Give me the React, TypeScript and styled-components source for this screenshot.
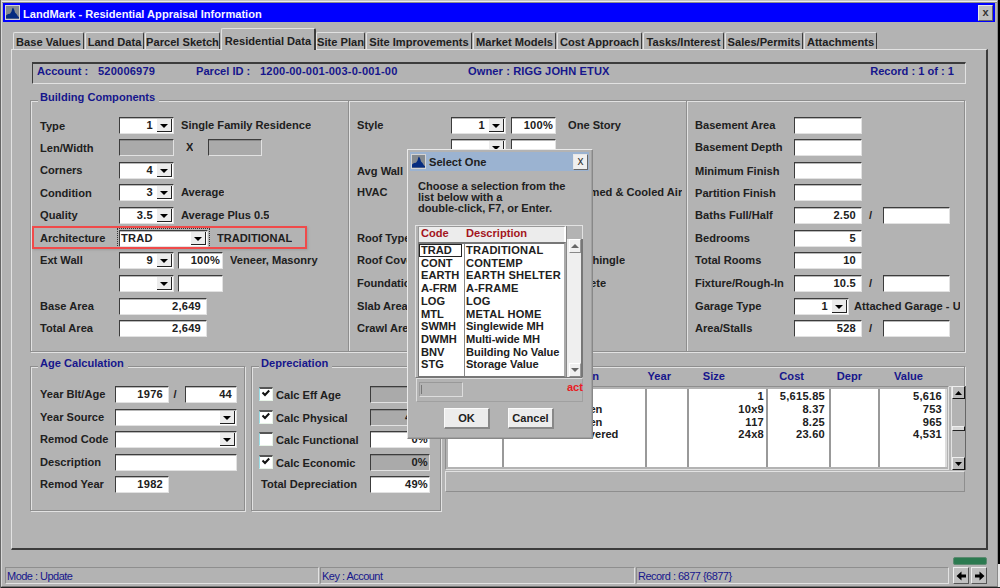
import React from "react";
import styled, { createGlobalStyle, css } from "styled-components";

const face = "#b3b3b3";
const light = "#e2e2e2";
const mid = "#8e8e8e";
const dark = "#3c3c3c";
const navy = "#16168c";

const GlobalStyle = createGlobalStyle`
  * { box-sizing: border-box; }
  body { margin: 0; background: #000; }
  #root {
    font: bold 11.1px/12px "Liberation Sans", Arial, sans-serif;
    color: #202020;
    white-space: nowrap;
    cursor: default;
  }
`;

const etched = css`
  border: 1px solid ${mid};
  box-shadow: inset 1px 1px 0 ${light}, 1px 1px 0 ${light};
`;

const Desktop = styled.div`
  position: relative;
  width: 1000px;
  height: 588px;
  overflow: hidden;
  border-left: 1px solid #666;
  background: linear-gradient(to bottom, #000 0 564px, #e8e8e8 564px 587px, #222 587px);
`;

const Window = styled.div`
  width: 997px;
  height: 587px;
  display: flex;
  flex-direction: column;
  background: ${face};
  border-left: 1px solid #d8d8d8;
  border-right: 1px solid #8a8a8a;
  border-bottom: 1px solid #777;
  border-top: 1px solid #c4c4c4;
  box-shadow: inset 0 1px 0 #ececec, inset 0 2px 0 #8d8d8d;
`;

const TitleBar = styled.div`
  display: flex;
  align-items: center;
  height: 19px;
  margin: 2px 2px 0 1px;
  padding: 0 2px 0 2px;
  background: #0000ff;
  color: #f4f4ff;
`;

const TitleText = styled.span`
  flex: 1;
  padding: 3px 0 0 3px;
`;

const CloseButton = styled.span<{ $pale?: boolean }>`
  width: 15px;
  height: 16px;
  text-align: center;
  line-height: 13px;
  font-size: ${(p) => (p.$pale ? 12 : 11)}px;
  font-weight: ${(p) => (p.$pale ? "normal" : "bold")};
  color: #333;
  background: ${(p) => (p.$pale ? "#efefef" : "#c0c0c0")};
  border: 1px solid;
  border-color: #e8e8e8 #666 #666 #e8e8e8;
`;

const TabStrip = styled.div`
  display: flex;
  align-items: flex-end;
  height: 22px;
  margin: 5px 0 0 11px;
  position: relative;
  z-index: 1;
`;

const Tab = styled.div<{ $w: number; $active?: boolean }>`
  width: ${(p) => p.$w}px;
  height: ${(p) => (p.$active ? 22 : 17)}px;
  padding-top: ${(p) => (p.$active ? 6 : 3)}px;
  margin-bottom: ${(p) => (p.$active ? -1 : 0)}px;
  text-align: center;
  background: ${face};
  border: 1px solid;
  border-color: ${light} ${dark} transparent ${light};
  border-bottom: 0;
  border-right-width: ${(p) => (p.$active ? 2 : 1)}px;
  border-radius: 2px 2px 0 0;
  margin-right: ${(p) => (p.$active ? 0 : 1)}px;
`;

const Panel = styled.div`
  width: 977px;
  height: 501px;
  margin-left: 9px;
  padding: 12px 0 0 18px;
  border: 1px solid;
  border-color: ${light} ${dark} ${dark} ${light};
  border-right-width: 2px;
  border-bottom-width: 2px;
`;

const AccountBar = styled.div`
  display: grid;
  grid-template-columns: 61px 98px 64px 208px 1fr auto;
  width: 934px;
  height: 22px;
  margin-left: 2px;
  padding: 1px 11px 0 4px;
  color: ${navy};
  border: 1px solid;
  border-color: ${dark} ${light} ${light} ${dark};
  border-top-width: 2px;
`;

const Num = styled.span`
  letter-spacing: 0.18px;
`;

const Owner = styled.span`
  letter-spacing: 0.1px;
`;

const Group = styled.section<{ $w: number; $h: number }>`
  ${etched}
  width: ${(p) => p.$w}px;
  height: ${(p) => p.$h}px;
`;

const Legend = styled.div`
  width: max-content;
  height: 14px;
  margin: -11px 0 0 7px;
  padding: 0 4px 0 2px;
  line-height: 14px;
  background: ${face};
  color: ${navy};
`;

const Columns = styled.div`
  display: grid;
  grid-template-columns: 317px 338px 1fr;
  height: 250px;
  margin-top: -3px;
`;

const Column = styled.div<{ $pad: number; $label: number; $divided?: boolean; $top: number }>`
  display: grid;
  grid-template-rows: 22px 23px 22px 23px 23px 22px 23px 23px 22px 22px;
  grid-auto-columns: 100%;
  align-content: start;
  overflow: hidden;
  padding: ${(p) => p.$top}px 4px 0 ${(p) => p.$pad}px;
  --label: ${(p) => p.$label}px;
  ${(p) =>
    p.$divided &&
    css`
      border-left: 1px solid ${mid};
      box-shadow: inset 1px 0 0 ${light};
    `}
`;

const Row = styled.div`
  position: relative;
  display: flex;
  align-items: flex-start;
  min-width: 0;
`;

const Label = styled.span<{ $down?: number }>`
  flex: none;
  width: var(--label);
  padding-top: ${(p) => 2 + (p.$down ?? 0)}px;
`;

const Note = styled.span<{ $gap: number }>`
  margin-left: ${(p) => p.$gap}px;
  padding-top: 2px;
  min-width: 0;
  overflow: hidden;
`;

const FieldBox = styled.span<{ $w: number; $off?: boolean; $gap?: number; $pad?: number }>`
  flex: none;
  display: flex;
  justify-content: flex-end;
  width: ${(p) => p.$w}px;
  height: 17px;
  margin-left: ${(p) => p.$gap ?? 0}px;
  padding: 1px ${(p) => p.$pad ?? 5}px 0 1px;
  background: ${(p) => (p.$off ? "#aaa" : "#fff")};
  border: 1px solid;
  border-color: ${dark} ${light} ${light} ${dark};
  box-shadow: inset 0 1px 0 ${(p) => (p.$off ? "#8a8a8a" : "#b8b8b8")};
  letter-spacing: 0.25px;
`;

const ComboBox = styled(FieldBox)`
  padding: 1px 1px 0 1px;
`;

const ComboValue = styled.span<{ $left?: boolean }>`
  flex: 1;
  padding-right: 4px;
  text-align: ${(p) => (p.$left ? "left" : "right")};
`;

const ComboButton = styled.span`
  display: flex;
  align-items: center;
  justify-content: center;
  width: 15px;
  height: 13px;
  padding-top: 1px;
  background: #ececec;
  border-right: 1px solid #222;
  border-bottom: 1px solid #222;
`;

const Down = ({ w = 8, h = 4, fill = "#000" }) => (
  <svg width={w} height={h} viewBox="0 0 8 4" preserveAspectRatio="none">
    <path d="M0 0H8L4 4Z" fill={fill} />
  </svg>
);

const Up = ({ w = 8, h = 4, fill = "#000" }) => (
  <svg width={w} height={h} viewBox="0 0 8 4" preserveAspectRatio="none">
    <path d="M0 4H8L4 0Z" fill={fill} />
  </svg>
);

const Combo = ({ w = 55, value = "", left = false }) => (
  <ComboBox $w={w}>
    <ComboValue $left={left}>{value}</ComboValue>
    <ComboButton>
      <Down />
    </ComboButton>
  </ComboBox>
);

const Logo = () => (
  <svg width="15" height="15" viewBox="0 0 15 15">
    <rect x="0.5" y="0.5" width="14" height="14" fill="#858b90" stroke="#d4d4d4" />
    <path d="M1 13.5V10.5L3 9L5 8.8L6.5 6.5L7.3 3.5L8 2.5L9.3 5L10 7.5L11.5 9L13 11.5L14 12V13.5Z" fill="#052c80" />
  </svg>
);

const FocusFrame = styled.div`
  position: absolute;
  left: 77px;
  top: -2px;
  width: 93px;
  height: 20px;
  border: 1px dotted #333;
`;

const Highlight = styled.div`
  position: absolute;
  left: -8px;
  top: -4px;
  width: 275px;
  height: 23px;
  border: 2px solid #f04a4a;
  box-shadow: 1px 1px 2px #8888;
`;

const LowerArea = styled.div`
  display: flex;
  margin-top: 14px;
`;

const FormRows = styled.div<{ $pad: number; $label: number }>`
  display: grid;
  grid-template-rows: 23px 22px 23px 22px 17px;
  padding: 16px 0 0 ${(p) => p.$pad}px;
  --label: ${(p) => p.$label}px;
`;

const Slash = styled.span<{ $w: number }>`
  width: ${(p) => p.$w}px;
  padding-top: 2px;
  text-align: center;
`;

const CheckBox = styled.span`
  flex: none;
  width: 14px;
  height: 14px;
  margin: 1px 3px 0 0;
  background: #fff;
  border: 1px solid;
  border-color: #555 #e8f4e8 #e8f4e8 #9adfe8;
  border-top-width: 2px;
  svg { display: block; margin: 0 0 0 1px; }
`;

const TableArea = styled.div`
  display: flex;
  flex-direction: column;
  width: 521px;
  margin-left: 4px;
`;

const TableHeader = styled.div`
  ${etched}
  display: flex;
  width: 520px;
  height: 20px;
  padding-top: 3px;
  color: ${navy};
  border-bottom: 0;
`;

const HeaderCell = styled.span<{ $w: number }>`
  flex: none;
  width: ${(p) => p.$w}px;
  text-align: right;
`;

const TableBody = styled.div`
  display: flex;
  height: 84px;
`;

const TableGrid = styled.div`
  display: grid;
  grid-template-columns: 56px 143px 42px 79px 63px 49px 67px;
  width: 504px;
  padding: 2px;
  border: 1px solid;
  border-color: ${mid} ${light} ${light} ${mid};
`;

const TableColumn = styled.div<{ $pad?: number; $left?: boolean }>`
  overflow: hidden;
  padding: ${(p) => (p.$left ? "1px 0 0 70px" : `1px ${p.$pad ?? 4}px 0 0`)};
  text-align: ${(p) => (p.$left ? "left" : "right")};
  line-height: 12.8px;
  letter-spacing: ${(p) => (p.$left ? 0 : 0.25)}px;
  background: #fff;
  border-right: 2px solid #999;
  &:last-child { border-right-color: #ddd; }
  div { height: 12.8px; }
`;

const ScrollBar = styled.div`
  display: flex;
  flex-direction: column;
  justify-content: space-between;
  width: 15px;
  margin-left: 2px;
  border-left: 1px solid ${light};
  border-right: 1px solid #666;
`;

const ScrollButton = styled.div`
  display: flex;
  align-items: center;
  justify-content: center;
  height: 13px;
  background: #bbb;
  border: 1px solid;
  border-color: #eee #111 #111 #eee;
`;

const ScrollThumb = styled.div`
  height: 5px;
  background: #d8d8d8;
  border: 1px solid;
  border-color: #eee #111 #222 #eee;
`;

const TableFooter = styled.div`
  width: 520px;
  height: 21px;
  margin-top: 1px;
  border: 1px solid;
  border-color: ${light} ${mid} ${mid} ${light};
`;

const StatusBar = styled.footer`
  display: flex;
  align-items: flex-end;
  margin: 5px 0 0 3px;
  height: 29px;
  color: ${navy};
`;

const StatusCell = styled.div<{ $w: number }>`
  width: ${(p) => p.$w}px;
  height: 17px;
  padding: 2px 0 0 1px;
  font-size: 11px;
  font-weight: normal;
  letter-spacing: -0.52px;
  border: 1px solid;
  border-color: ${mid} ${light} ${light} ${mid};
  margin-right: 1px;
`;

const Navigator = styled.div`
  display: grid;
  grid-template-columns: 16px 16px;
  gap: 2px 2px;
  margin-left: 3px;
`;

const Indicator = styled.div`
  grid-column: 1 / 3;
  height: 8px;
  background: #2c7a50;
  border: 1px solid #5c8a70;
  border-radius: 2px;
`;

const NavButton = styled.div`
  display: flex;
  align-items: center;
  justify-content: center;
  height: 17px;
  background: #c0c0c0;
  border: 1px solid;
  border-color: #eee #555 #555 #eee;
`;

const Dialog = styled.div`
  position: absolute;
  left: 406px;
  top: 149px;
  width: 186px;
  height: 290px;
  padding: 2px;
  background: ${face};
  border: 1px solid;
  border-color: #eaeaea #888 #888 #eaeaea;
  box-shadow: inset -1px -1px 0 #a0a0a0;
`;

const DialogTitle = styled.div`
  display: flex;
  align-items: center;
  height: 19px;
  margin-right: 1px;
  padding: 0 1px;
  background: #9bb3d1;
`;

const DialogTitleText = styled(TitleText)`
  padding: 1px 0 0 3px;
`;

const DialogText = styled.p`
  margin: 10px 0 0 8px;
  line-height: 11px;
  letter-spacing: -0.04px;
`;

const ListFrame = styled.div`
  display: grid;
  grid-template-columns: 151px 16px;
  width: 168px;
  height: 153px;
  margin: 11px 0 0 5px;
  border: 1px solid ${light};
  border-bottom: 1px solid #777;
`;

const ListSide = styled.div`
  display: flex;
  flex-direction: column;
  border-right: 1px solid #888;
`;

const ListHeader = styled.div`
  display: grid;
  grid-template-columns: 45px 1fr;
  height: 16px;
  padding: 0 0 0 2px;
  margin-left: 2px;
  color: #a31520;
  background: #ececec;
  border-top: 1px solid #999;
  border-left: 1px solid #999;
  border-right: 2px solid #fff;
`;

const ListBody = styled.div`
  flex: 1;
  display: grid;
  grid-template-columns: 46px 1fr;
  grid-template-rows: repeat(10, 12.72px);
  margin-left: 2px;
  line-height: 12px;
  background: linear-gradient(to right, #fff 45px, #888 45px 46px, #fff 46px);
  border: 1px solid #777;
  border-width: 2px 2px 1px 1px;
  border-right-color: #aaa;
`;

const Code = styled.span<{ $focused?: boolean }>`
  padding-left: 1px;
  margin-right: 3px;
  border: 1px solid ${(p) => (p.$focused ? "#222" : "transparent")};
  line-height: 10px;
`;

const Description = styled.span<{ $caps: boolean }>`
  padding-left: 1px;
  letter-spacing: ${(p) => (p.$caps ? 0.2 : -0.05)}px;
`;

const ListScroll = styled.div`
  display: flex;
  flex-direction: column;
  justify-content: space-between;
  margin-top: 13px;
  padding-left: 1px;
  background: #efefef;
  border-right: 2px solid #777;
  border-left: 1px solid #eee;
`;

const ListScrollButton = styled.div`
  display: flex;
  align-items: center;
  justify-content: center;
  height: 14px;
  border: 1px solid;
  border-color: #fff #999 #888 #fff;
`;

const SearchBar = styled.div`
  display: flex;
  justify-content: space-between;
  width: 167px;
  height: 24px;
  margin: 0 0 0 6px;
  padding: 3px 0 0 2px;
  color: #e81c24;
  border: 1px solid #a0a0a0;
  border-left-color: #ddd;
  border-top-color: #ddd;
  span { margin: -1px -1px 0 0; }
`;

const SearchInput = styled.div`
  width: 44px;
  height: 15px;
  padding: 2px 1px;
  border: 1px solid;
  border-color: #999 #ddd #ddd #999;
  &::before { content: ""; display: block; width: 1px; height: 9px; background: #777; }
`;

const Buttons = styled.div`
  display: flex;
  gap: 18px;
  margin: 6px 0 0 34px;
`;

const PushButton = styled.div`
  width: 46px;
  height: 21px;
  text-align: center;
  line-height: 19px;
  background: #ececec;
  border: 1px solid;
  border-color: #fafafa #888 #888 #fafafa;
  border-right-width: 2px;
  border-bottom-width: 2px;
`;

const tabs: [string, number][] = [
  ["Base Values", 71],
  ["Land Data", 59],
  ["Parcel Sketch", 75],
  ["Residential Data", 95],
  ["Site Plan", 49],
  ["Site Improvements", 106],
  ["Market Models", 83],
  ["Cost Approach", 85],
  ["Tasks/Interest", 81],
  ["Sales/Permits", 78],
  ["Attachments", 73],
];

const choices = [
  ["TRAD", "TRADITIONAL"],
  ["CONT", "CONTEMP"],
  ["EARTH", "EARTH SHELTER"],
  ["A-FRM", "A-FRAME"],
  ["LOG", "LOG"],
  ["MTL", "METAL HOME"],
  ["SWMH", "Singlewide MH"],
  ["DWMH", "Multi-wide MH"],
  ["BNV", "Building No Value"],
  ["STG", "Storage Value"],
];

const Check = ({ label, on, value, off }: { label: string; on: boolean; value: string; off?: boolean }) => (
  <Row>
    <CheckBox>
      {on && (
        <svg width="10" height="10" viewBox="0 0 10 10">
          <path d="M1.5 3.5L4 6L8.2 1.5" fill="none" stroke="#111" strokeWidth="2" />
        </svg>
      )}
    </CheckBox>
    <Label $down={1}>{label}</Label>
    <FieldBox $w={60} $off={off} $pad={1}>{value}</FieldBox>
  </Row>
);

const BuildingComponents = () => (
  <Group $w={935} $h={252}>
    <Legend>Building Components</Legend>
    <Columns>
      <Column $pad={9} $label={79} $top={16}>
        <Row><Label $down={1}>Type</Label><Combo value="1" /><Note $gap={7}>Single Family Residence</Note></Row>
        <Row>
          <Label $down={1}>Len/Width</Label>
          <FieldBox $w={55} $off />
          <Note $gap={12}>X</Note>
          <FieldBox $w={54} $off $gap={15} />
        </Row>
        <Row><Label>Corners</Label><Combo value="4" /></Row>
        <Row><Label $down={1}>Condition</Label><Combo value="3" /><Note $gap={7}>Average</Note></Row>
        <Row><Label>Quality</Label><Combo value="3.5" /><Note $gap={7}>Average Plus 0.5</Note></Row>
        <Row>
          <Label>Architecture</Label><Combo w={89} value="TRAD" left /><Note $gap={9}>TRADITIONAL</Note>
          <FocusFrame />
          <Highlight />
        </Row>
        <Row>
          <Label>Ext Wall</Label><Combo value="9" />
          <FieldBox $w={45} $gap={4} $pad={2}>100%</FieldBox>
          <Note $gap={7}>Veneer, Masonry</Note>
        </Row>
        <Row><Label /><Combo /><FieldBox $w={45} $gap={4} /></Row>
        <Row><Label>Base Area</Label><FieldBox $w={88}>2,649</FieldBox></Row>
        <Row><Label>Total Area</Label><FieldBox $w={88}>2,649</FieldBox></Row>
      </Column>
      <Column $pad={8} $label={94} $divided $top={16}>
        <Row><Label>Style</Label><Combo value="1" /><FieldBox $w={45} $gap={5} $pad={2}>100%</FieldBox><Note $gap={12}>One Story</Note></Row>
        <Row><Label /><Combo /><FieldBox $w={45} $gap={5} /></Row>
        <Row><Label $down={1}>Avg Wall</Label></Row>
        <Row><Label>HVAC</Label><Note $gap={118}>Warmed &amp; Cooled Air</Note></Row>
        <Row />
        <Row><Label>Roof Type</Label></Row>
        <Row><Label>Roof Cover</Label><Note $gap={134}>Shingle</Note></Row>
        <Row><Label>Foundation</Label><Note $gap={107}>Concrete</Note></Row>
        <Row><Label>Slab Area</Label></Row>
        <Row><Label>Crawl Area</Label></Row>
      </Column>
      <Column $pad={8} $label={99} $divided $top={16}>
        <Row><Label>Basement Area</Label><FieldBox $w={68} /></Row>
        <Row><Label>Basement Depth</Label><FieldBox $w={68} /></Row>
        <Row><Label $down={1}>Minimum Finish</Label><FieldBox $w={68} /></Row>
        <Row><Label $down={1}>Partition Finish</Label><FieldBox $w={68} /></Row>
        <Row><Label>Baths Full/Half</Label><FieldBox $w={68}>2.50</FieldBox><Slash $w={17}>/</Slash><FieldBox $w={67} $gap={4} /></Row>
        <Row><Label>Bedrooms</Label><FieldBox $w={68}>5</FieldBox></Row>
        <Row><Label>Total Rooms</Label><FieldBox $w={68}>10</FieldBox></Row>
        <Row><Label>Fixture/Rough-In</Label><FieldBox $w={68}>10.5</FieldBox><Slash $w={17}>/</Slash><FieldBox $w={67} $gap={4} /></Row>
        <Row><Label>Garage Type</Label><Combo value="1" /><Note $gap={5}>Attached Garage - U</Note></Row>
        <Row><Label>Area/Stalls</Label><FieldBox $w={68}>528</FieldBox><Slash $w={17}>/</Slash><FieldBox $w={67} $gap={4} /></Row>
      </Column>
    </Columns>
  </Group>
);

const Gap = styled.div<{ $h: number }>`
  height: ${(p) => p.$h}px;
`;

const AgeCalculation = () => (
  <Group $w={215} $h={145}>
    <Legend>Age Calculation</Legend>
    <FormRows $pad={9} $label={75}>
      <Row><Label>Year Blt/Age</Label><FieldBox $w={54}>1976</FieldBox><Slash $w={12}>/</Slash><FieldBox $w={52} $gap={4} $pad={4}>44</FieldBox></Row>
      <Row><Label>Year Source</Label><Combo w={122} /></Row>
      <Row><Label>Remod Code</Label><Combo w={122} /></Row>
      <Row><Label>Description</Label><FieldBox $w={122} /></Row>
      <Row><Label>Remod Year</Label><FieldBox $w={54}>1982</FieldBox></Row>
    </FormRows>
  </Group>
);

const DepreciationGroup = styled(Group)`
  margin-left: 6px;
`;

const Total = styled(Label)`
  width: 109px;
  padding-left: 2px;
`;

const Depreciation = () => (
  <DepreciationGroup $w={190} $h={145}>
    <Legend>Depreciation</Legend>
    <FormRows $pad={7} $label={94}>
      <Check label="Calc Eff Age" on value="" off />
      <Check label="Calc Physical" on value="49%" off />
      <Check label="Calc Functional" on={false} value="0%" />
      <Check label="Calc Economic" on value="0%" off />
      <Row><Total>Total Depreciation</Total><FieldBox $w={60} $gap={2} $pad={1}>49%</FieldBox></Row>
    </FormRows>
  </DepreciationGroup>
);

const TableColumnOf = ({ items, pad, left }: { items: string[]; pad?: number; left?: boolean }) => (
  <TableColumn $pad={pad} $left={left}>
    {items.map((item, i) => <div key={i}>{item}</div>)}
  </TableColumn>
);

const Improvements = () => (
  <TableArea>
    <TableHeader>
      <HeaderCell $w={153}>Description</HeaderCell>
      <HeaderCell $w={72}>Year</HeaderCell>
      <HeaderCell $w={54}>Size</HeaderCell>
      <HeaderCell $w={79}>Cost</HeaderCell>
      <HeaderCell $w={58}>Depr</HeaderCell>
      <HeaderCell $w={61}>Value</HeaderCell>
    </TableHeader>
    <TableBody>
      <TableGrid>
        <TableColumnOf items={[]} />
        <TableColumnOf left items={["", "Open", "Open", "Covered"]} />
        <TableColumnOf items={[]} />
        <TableColumnOf pad={2} items={["1", "10x9", "117", "24x8"]} />
        <TableColumnOf items={["5,615.85", "8.37", "8.25", "23.60"]} />
        <TableColumnOf items={[]} />
        <TableColumnOf pad={3} items={["5,616", "753", "965", "4,531"]} />
      </TableGrid>
      <ScrollBar>
        <ScrollButton><Up w={7} h={4} /></ScrollButton>
        <ScrollThumb />
        <ScrollButton><Down w={7} h={4} /></ScrollButton>
      </ScrollBar>
    </TableBody>
    <TableFooter />
  </TableArea>
);

const SelectDialog = () => (
  <Dialog>
    <DialogTitle>
      <Logo />
      <DialogTitleText>Select One</DialogTitleText>
      <CloseButton $pale>x</CloseButton>
    </DialogTitle>
    <DialogText>
      Choose a selection from the<br />list below with a<br />double-click, F7, or Enter.
    </DialogText>
    <ListFrame>
      <ListSide>
        <ListHeader><span>Code</span><span>Description</span></ListHeader>
        <ListBody>
          {choices.map(([code, text], i) => (
            <React.Fragment key={code}>
              <Code $focused={i === 0}>{code}</Code>
              <Description $caps={text === text.toUpperCase()}>{text}</Description>
            </React.Fragment>
          ))}
        </ListBody>
      </ListSide>
      <ListScroll>
        <ListScrollButton><Up w={8} h={4} fill="#666" /></ListScrollButton>
        <ListScrollButton><Down w={8} h={4} fill="#666" /></ListScrollButton>
      </ListScroll>
    </ListFrame>
    <SearchBar><SearchInput /><span>act</span></SearchBar>
    <Buttons>
      <PushButton>OK</PushButton>
      <PushButton>Cancel</PushButton>
    </Buttons>
  </Dialog>
);

export default function App() {
  return (
    <Desktop>
      <GlobalStyle />
      <Window>
        <TitleBar>
          <Logo />
          <TitleText>LandMark - Residential Appraisal Information</TitleText>
          <CloseButton>x</CloseButton>
        </TitleBar>
        <TabStrip>
          {tabs.map(([name, w]) => (
            <Tab key={name} $w={w} $active={name === "Residential Data"}>{name}</Tab>
          ))}
        </TabStrip>
        <Panel>
          <AccountBar>
            <span>Account :</span>
            <Num>520006979</Num>
            <span>Parcel ID :</span>
            <Num>1200-00-001-003-0-001-00</Num>
            <Owner>Owner : RIGG JOHN ETUX</Owner>
            <span>Record : 1 of : 1</span>
          </AccountBar>
          <Gap $h={16} />
          <BuildingComponents />
          <LowerArea>
            <AgeCalculation />
            <Depreciation />
            <Improvements />
          </LowerArea>
        </Panel>
        <StatusBar>
          <StatusCell $w={314}>Mode : Update</StatusCell>
          <StatusCell $w={315}>Key : Account</StatusCell>
          <StatusCell $w={313}>Record : 6877 {"{6877}"}</StatusCell>
          <Navigator>
            <Indicator />
            <NavButton>
              <svg width="11" height="10" viewBox="0 0 11 10"><path d="M0.5 5L5.5 0.5V3.5H10V6.5H5.5V9.5Z" fill="#000" /></svg>
            </NavButton>
            <NavButton>
              <svg width="11" height="10" viewBox="0 0 11 10"><path d="M10.5 5L5.5 0.5V3.5H1V6.5H5.5V9.5Z" fill="#000" /></svg>
            </NavButton>
          </Navigator>
        </StatusBar>
      </Window>
      <SelectDialog />
    </Desktop>
  );
}
